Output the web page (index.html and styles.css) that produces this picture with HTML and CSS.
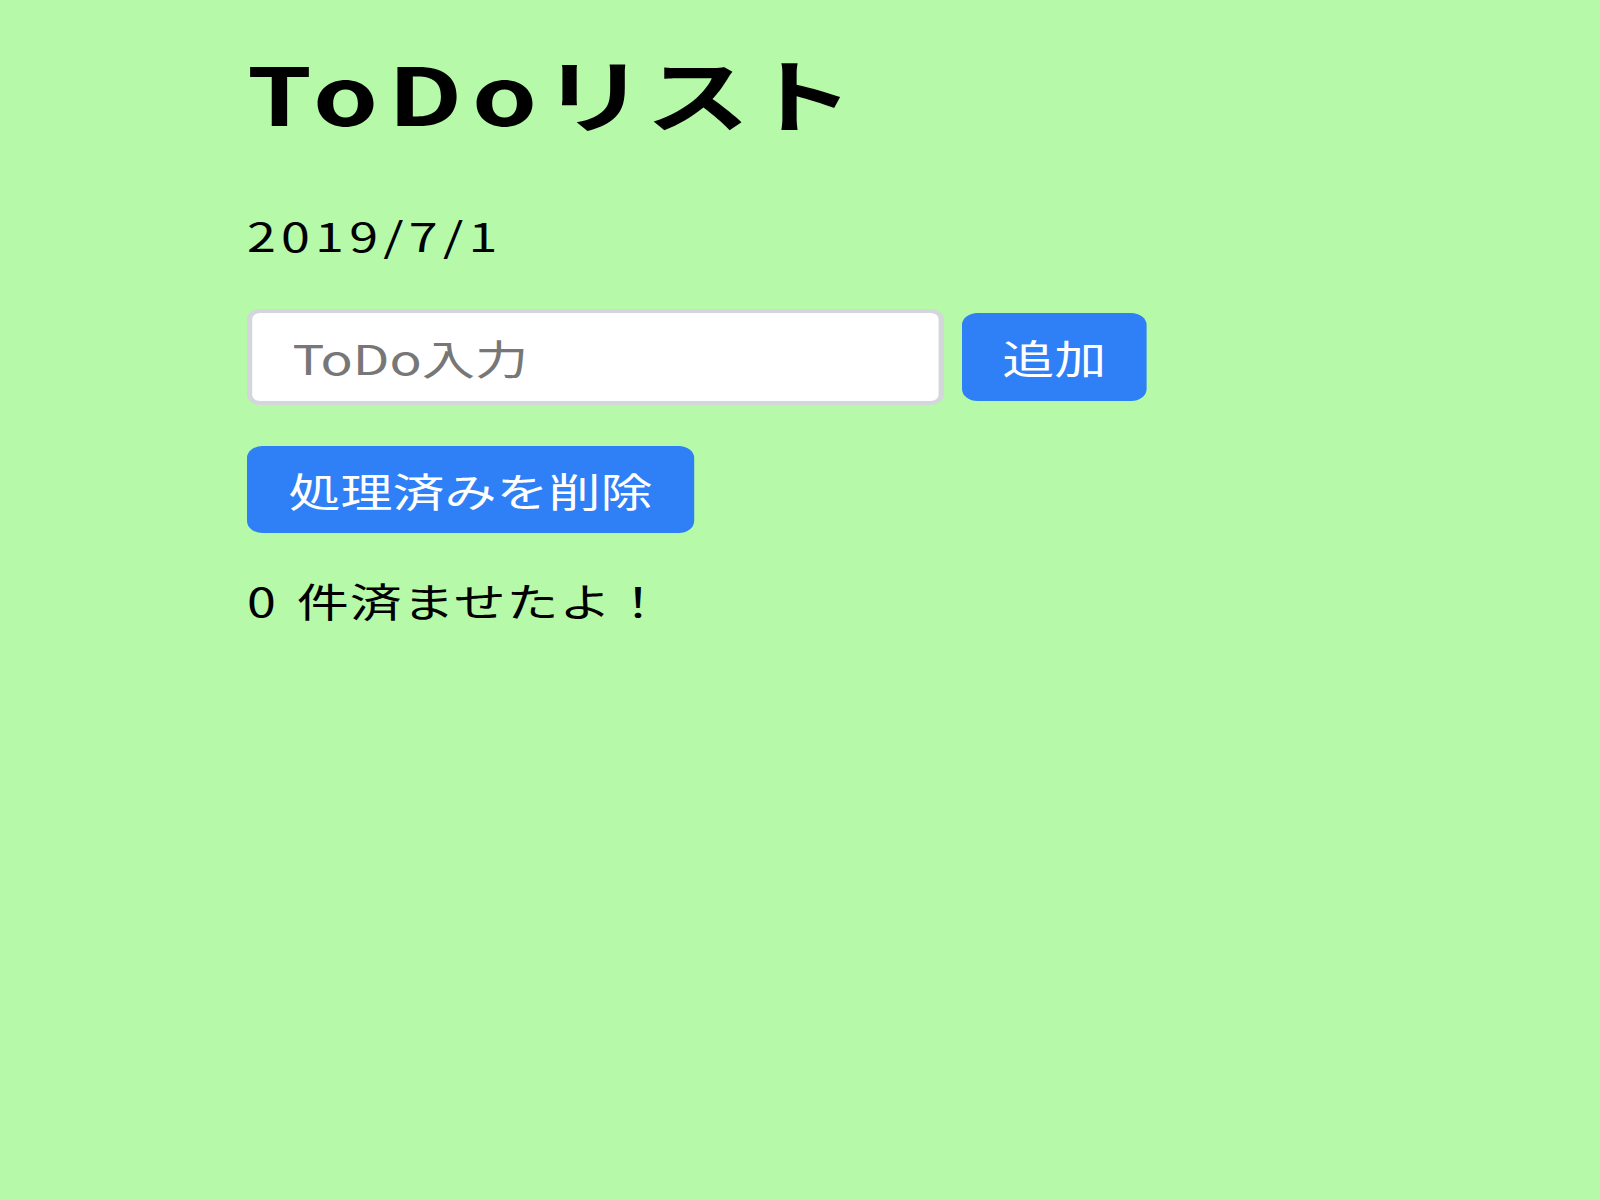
FILE: index.html
```html
<!DOCTYPE html>
<html lang="ja">
<head>
<meta charset="utf-8">
<title>ToDoリスト</title>
<link rel="stylesheet" href="styles.css">
</head>
<body>
<div class="app">
  <h1 class="title"><span class="title-latin">ToDo</span><span class="title-kana">リスト</span></h1>
  <p class="date">2019/7/1</p>
  <div class="add-row">
    <input class="todo-input" type="text" placeholder="ToDo入力">
    <button class="btn btn-add">追加</button>
  </div>
  <button class="btn btn-clear">処理済みを削除</button>
  <p class="count">0 件済ませたよ！</p>
</div>
</body>
</html>
```

FILE: styles.css
```css
html, body {
  margin: 0;
  padding: 0;
  background: #b6faa9;
  height: 100%;
}
body {
  font-family: "Noto Sans CJK JP", "Noto Sans", sans-serif;
  color: #000;
  overflow: hidden;
}
.app {
  box-sizing: border-box;
  width: 1000px;
  transform: scaleX(1.3);
  transform-origin: 0 0;
  padding: 41px 0 0 190px;
  display: flex;
  flex-direction: column;
  align-items: flex-start;
}
.title {
  margin: 0;
  font-size: 80px;
  line-height: 100px;
  font-weight: 700;
}
.title-latin {
  letter-spacing: 7.5px;
  margin-right: -4px;
}
.title-kana {
  letter-spacing: 0;
}
.date {
  margin: 69px 0 0;
  font-size: 40px;
  line-height: 50px;
  letter-spacing: 4px;
}
.add-row {
  margin-top: 49px;
  display: flex;
  align-items: center;
  gap: 14px;
}
.todo-input {
  box-sizing: border-box;
  width: 536px;
  height: 96px;
  border: 4px solid #d3d6da;
  border-radius: 10px;
  padding: 0 0 0 31px;
  font-family: inherit;
  font-size: 41px;
  background: #fff;
  outline: none;
}
.todo-input::placeholder {
  color: #777;
}
.btn {
  font-family: inherit;
  border: none;
  background: #2f7ff6;
  color: #fff;
  border-radius: 12px;
  font-size: 40px;
  line-height: 1;
  padding: 0;
}
.btn-add {
  width: 142px;
  height: 88px;
}
.btn-clear {
  margin-top: 41px;
  width: 344px;
  height: 87px;
}
.count {
  margin: 43px 0 0;
  font-size: 40px;
  line-height: 48px;
  word-spacing: 6px;
  letter-spacing: 0.6px;
}
```
